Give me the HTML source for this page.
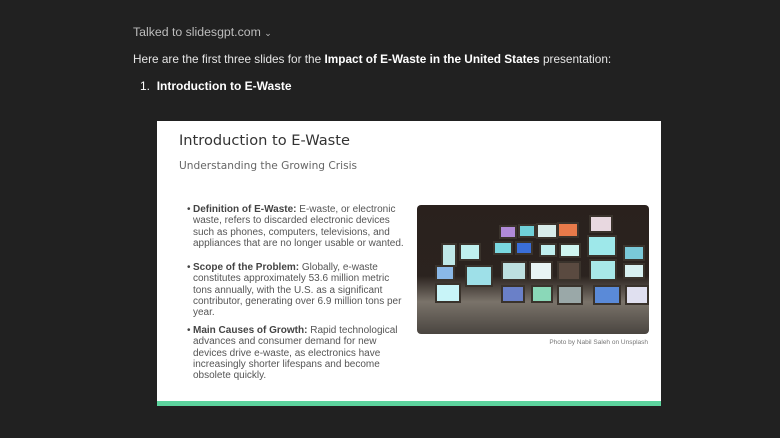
<!DOCTYPE html>
<html><head><style>
body{margin:0;width:780px;height:438px;background:#212121;position:relative;overflow:hidden;font-family:"Liberation Sans",Arial,sans-serif;}
.t{position:absolute;color:#e6e6e6;font-size:11.8px;white-space:nowrap;}
.slide{position:absolute;left:157px;top:121px;width:504px;height:285px;background:#fff;}
.green{position:absolute;left:0;bottom:0;width:100%;height:5px;background:#5dd39e;}
.s{position:absolute;font-family:"DejaVu Sans","Liberation Sans",sans-serif;white-space:nowrap}
.b{position:absolute;left:36px;white-space:nowrap;font-size:10px;line-height:11.3px;color:#555;font-family:"Liberation Sans",sans-serif;}
.b b{color:#444}
.b:before{content:"•";position:absolute;left:-6px;color:#444}
.img{position:absolute;left:260px;top:84px;width:232px;height:129px;border-radius:4px;overflow:hidden;background:linear-gradient(#2a211d 0%,#2b231f 55%,#7a736a 75%,#4a4540 100%);}
.tv{position:absolute;border:2px solid #3a332c;}
</style></head><body>
<div class="t" style="left:133px;top:25px;color:#bdbdbd;font-size:12.3px">Talked to slidesgpt.com <span style="font-size:9px">&#8964;</span></div>
<div class="t" style="left:133px;top:52px;font-size:11.8px">Here are the first three slides for the <b style="color:#fff">Impact of E-Waste in the United States</b> presentation:</div>
<div class="t" style="left:140px;top:79px;color:#fff;font-size:12px">1.&nbsp; <b>Introduction to E-Waste</b></div>
<div class="slide">
<div class="s" style="left:22px;top:11px;font-size:14.6px;color:#333">Introduction to E-Waste</div>
<div class="s" style="left:22px;top:39px;font-size:10.6px;color:#666">Understanding the Growing Crisis</div>
<div class="b" style="top:83px"><b>Definition of E-Waste:</b> E-waste, or electronic<br>waste, refers to discarded electronic devices<br>such as phones, computers, televisions, and<br>appliances that are no longer usable or wanted.</div>
<div class="b" style="top:141px"><b>Scope of the Problem:</b> Globally, e-waste<br>constitutes approximately 53.6 million metric<br>tons annually, with the U.S. as a significant<br>contributor, generating over 6.9 million tons per<br>year.</div>
<div class="b" style="top:204px"><b>Main Causes of Growth:</b> Rapid technological<br>advances and consumer demand for new<br>devices drive e-waste, as electronics have<br>increasingly shorter lifespans and become<br>obsolete quickly.</div>
<div class="img">
<div class="tv" style="left:82px;top:20px;width:14px;height:10px;background:#b08ad8"></div>
<div class="tv" style="left:101px;top:19px;width:14px;height:10px;background:#6fd0d8"></div>
<div class="tv" style="left:119px;top:18px;width:18px;height:12px;background:#d8ecea"></div>
<div class="tv" style="left:140px;top:17px;width:18px;height:12px;background:#e87a4a"></div>
<div class="tv" style="left:172px;top:10px;width:20px;height:14px;background:#e8d8e0"></div>
<div class="tv" style="left:24px;top:38px;width:12px;height:20px;background:#bfe8e8"></div>
<div class="tv" style="left:42px;top:38px;width:18px;height:14px;background:#bff0ee"></div>
<div class="tv" style="left:76px;top:36px;width:16px;height:10px;background:#7ad8e0"></div>
<div class="tv" style="left:98px;top:36px;width:14px;height:10px;background:#3a6ed8"></div>
<div class="tv" style="left:122px;top:38px;width:14px;height:10px;background:#bfeeee"></div>
<div class="tv" style="left:142px;top:38px;width:18px;height:11px;background:#cff5f0"></div>
<div class="tv" style="left:170px;top:30px;width:26px;height:18px;background:#9ee8ea"></div>
<div class="tv" style="left:206px;top:40px;width:18px;height:12px;background:#7ac8d8"></div>
<div class="tv" style="left:18px;top:60px;width:16px;height:12px;background:#8ab8e8"></div>
<div class="tv" style="left:48px;top:60px;width:24px;height:18px;background:#9ee0e8"></div>
<div class="tv" style="left:84px;top:56px;width:22px;height:16px;background:#bde0e0"></div>
<div class="tv" style="left:112px;top:56px;width:20px;height:16px;background:#e8f4f4"></div>
<div class="tv" style="left:140px;top:56px;width:20px;height:16px;background:#5a4a40"></div>
<div class="tv" style="left:172px;top:54px;width:24px;height:18px;background:#a8e8e8"></div>
<div class="tv" style="left:206px;top:58px;width:18px;height:12px;background:#d8f0f0"></div>
<div class="tv" style="left:18px;top:78px;width:22px;height:16px;background:#c8f4f8"></div>
<div class="tv" style="left:84px;top:80px;width:20px;height:14px;background:#6a80c8"></div>
<div class="tv" style="left:114px;top:80px;width:18px;height:14px;background:#8ad8b8"></div>
<div class="tv" style="left:140px;top:80px;width:22px;height:16px;background:#9aa8a8"></div>
<div class="tv" style="left:176px;top:80px;width:24px;height:16px;background:#5a8ad8"></div>
<div class="tv" style="left:208px;top:80px;width:20px;height:16px;background:#e0e0f0"></div>
</div>
<div class="s" style="right:13px;top:218px;font-size:6.5px;color:#777;font-family:'Liberation Sans',sans-serif">Photo by Nabil Saleh on Unsplash</div>
<div class="green"></div>
</div>
</body></html>
